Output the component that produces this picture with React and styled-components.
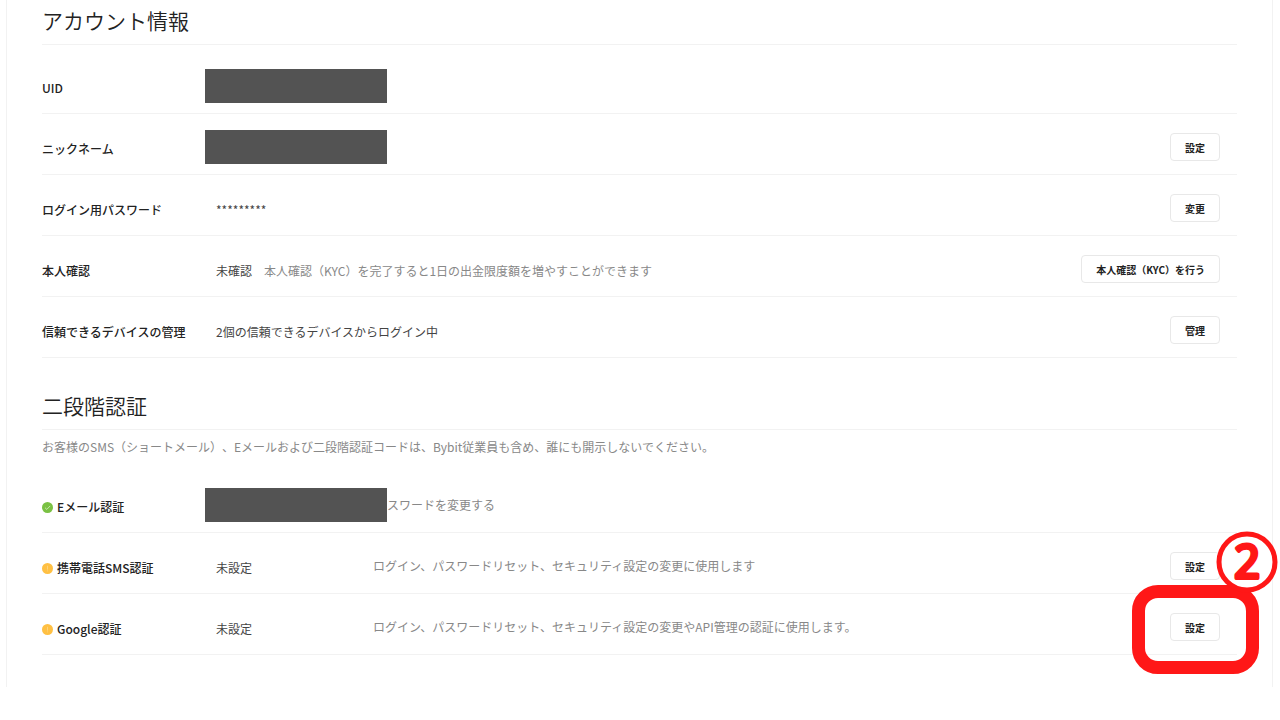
import React from 'react'
import styled, { createGlobalStyle } from 'styled-components'

const GlobalStyle = createGlobalStyle`
  * {
    box-sizing: border-box;
  }

  body {
    margin: 0;
    background: #fff;
    color: #333;
    font-family: 'Noto Sans CJK JP', 'Noto Sans', sans-serif;
    font-size: 12px;
    line-height: 18px;
    text-spacing-trim: space-all;
  }
`

const Card = styled.main`
  margin: 0 7px 34px 6px;
  padding: 0 35px 32px;
  border: solid #f2f2f2;
  border-width: 0 1px;
`

const Section = styled.section`
  & + & {
    margin-top: 27px;
  }
`

const Title = styled.h2`
  margin: 0;
  padding-bottom: 4px;
  border-bottom: 1px solid #f2f2f2;
  color: #222;
  font-size: 21px;
  font-weight: 350;
  line-height: 40px;
`

const Note = styled.p`
  margin: 0;
  padding-top: 8px;
  color: #888;
  line-height: 18px;
`

const Rows = styled.div`
  padding-top: ${({ $gap }) => $gap}px;
`

const Row = styled.div`
  display: flex;
  align-items: center;
  padding: 19px 17px 13px 0;
  min-height: 61px;
  border-bottom: 1px solid #f2f2f2;
`

const Label = styled.div`
  display: flex;
  align-items: center;
  gap: 4px;
  flex: 0 0 163px;
  padding-top: 3px;
  color: #222;
  font-weight: 500;
  white-space: nowrap;
`

const Value = styled.div`
  flex: ${({ $narrow }) => ($narrow ? '0 0 168px' : '1')};
  padding: 3px 0 0 11px;
  color: #444;
`

const Hint = styled.span`
  margin-left: 12px;
  color: #888;
`

const Description = styled.div`
  flex: 1;
  color: #888;
`

const Redacted = styled.div`
  flex: 0 0 182px;
  height: 34px;
  margin: -3px 0;
  background: #535353;
`

const Action = styled.div`
  position: relative;
  margin-left: auto;
`

const Button = styled.button`
  display: block;
  height: 28px;
  padding: 0 14px;
  border: 1px solid #e8e8e8;
  border-radius: 4px;
  background: #fff;
  color: #222;
  font-family: inherit;
  font-size: 10px;
  font-weight: 700;
  cursor: pointer;
`

const StatusIcon = styled.svg`
  flex: none;
  width: 11px;
  height: 11px;
  margin-top: 2px;
`

const Highlight = styled.div`
  position: absolute;
  inset: -28px -39px -33px -38px;
  border: 13px solid #ff1717;
  border-radius: 26px;
  pointer-events: none;
`

const StepBadge = styled.svg`
  position: absolute;
  top: -67px;
  right: -32px;
  width: 62px;
  height: 62px;
  overflow: visible;

  text {
    font-family: 'Open Sans', 'Noto Sans', sans-serif;
    font-size: 45px;
    font-weight: 400;
  }
`

const Status = ({ ok }) => (
  <StatusIcon viewBox="0 0 11 11" aria-hidden="true">
    <circle cx="5.5" cy="5.5" r="5.5" fill={ok ? '#7ac143' : '#ffc043'} />
    {ok ? (
      <path d="M3 5.7 4.8 7.4 8.2 3.9" fill="none" stroke="#d9f0c8" strokeWidth="0.8" />
    ) : (
      <path d="M5.5 2.8v3.8M5.5 7.5v.8" stroke="#ffd88a" strokeWidth="0.8" />
    )}
  </StatusIcon>
)

const Step = ({ number }) => (
  <Highlight>
    <StepBadge viewBox="0 0 62 62">
      <circle cx="31" cy="31" r="28" fill="#fff" stroke="#ff1717" strokeWidth="5" />
      <text
        x="31"
        y="47"
        textAnchor="middle"
        fill="#ff1717"
        stroke="#ff1717"
        strokeWidth="4"
        strokeLinejoin="round"
      >
        {number}
      </text>
    </StepBadge>
  </Highlight>
)

const App = () => (
  <>
    <GlobalStyle />
    <Card>
      <Section>
        <Title>アカウント情報</Title>
        <Rows $gap={8}>
          <Row>
            <Label>UID</Label>
            <Redacted />
          </Row>
          <Row>
            <Label>ニックネーム</Label>
            <Redacted />
            <Action>
              <Button>設定</Button>
            </Action>
          </Row>
          <Row>
            <Label>ログイン用パスワード</Label>
            <Value>*********</Value>
            <Action>
              <Button>変更</Button>
            </Action>
          </Row>
          <Row>
            <Label>本人確認</Label>
            <Value>
              未確認
              <Hint>本人確認（KYC）を完了すると1日の出金限度額を増やすことができます</Hint>
            </Value>
            <Action>
              <Button>本人確認（KYC）を行う</Button>
            </Action>
          </Row>
          <Row>
            <Label>信頼できるデバイスの管理</Label>
            <Value>2個の信頼できるデバイスからログイン中</Value>
            <Action>
              <Button>管理</Button>
            </Action>
          </Row>
        </Rows>
      </Section>

      <Section>
        <Title>二段階認証</Title>
        <Note>
          お客様のSMS（ショートメール）、Eメールおよび二段階認証コードは、Bybit従業員も含め、誰にも開示しないでください。
        </Note>
        <Rows $gap={16}>
          <Row>
            <Label>
              <Status ok />
              Eメール認証
            </Label>
            <Redacted />
            <Description>スワードを変更する</Description>
          </Row>
          <Row>
            <Label>
              <Status />
              携帯電話SMS認証
            </Label>
            <Value $narrow>未設定</Value>
            <Description>
              ログイン、パスワードリセット、セキュリティ設定の変更に使用します
            </Description>
            <Action>
              <Button>設定</Button>
            </Action>
          </Row>
          <Row>
            <Label>
              <Status />
              Google認証
            </Label>
            <Value $narrow>未設定</Value>
            <Description>
              ログイン、パスワードリセット、セキュリティ設定の変更やAPI管理の認証に使用します。
            </Description>
            <Action>
              <Button>設定</Button>
              <Step number="2" />
            </Action>
          </Row>
        </Rows>
      </Section>
    </Card>
  </>
)

export default App
